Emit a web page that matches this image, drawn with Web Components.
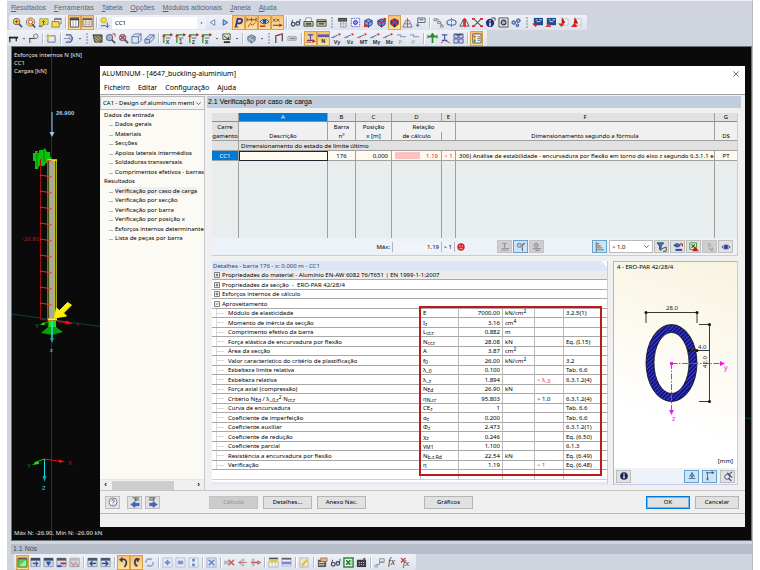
<!DOCTYPE html>
<html lang="pt">
<head>
<meta charset="utf-8">
<title>ALUMINUM</title>
<style>
html,body{margin:0;min-height:100%;background:#fff}
body{font:6px/8px "Noto Sans","Liberation Sans",sans-serif;color:#000}
</style>
</head>
<body>
<app-shell></app-shell>
<script>
const BASE = `*{box-sizing:border-box}
button,select,input{font:inherit;color:inherit;margin:0;padding:0;border-radius:0}
button{cursor:pointer}a{color:inherit;text-decoration:none}`;
function define(name, css, html, setup) {
  customElements.define(name, class extends HTMLElement {
    connectedCallback() {
      if (this.shadowRoot) return;
      const root = this.attachShadow({ mode: 'open' });
      root.innerHTML = `<style>${BASE}${css}</style>${typeof html === 'function' ? html(this) : html}`;
      if (setup) setup(this, root);
    }
  });
}

/* Icon library, drawn on a 12 x 12 grid */
const diag = (t, c = '#333') => `<path d="M1 5L8 2" stroke="#555aa0" stroke-width="1"/><path d="M8 0l3 1-2 2z" fill="#d22"/><path d="M0 5h4" stroke="#7c86c4"/><text x="3" y="11.500" font-size="6" font-family="Liberation Sans" font-weight="700" fill="${c}">${t}</text>`;
const tableIco = (top, mark) => `<path d="M1 1.500h10v9h-10z" fill="#e4e8ef" stroke="#6b7384" stroke-width=".7"/><path d="M1 1h10v3h-10z" fill="${top}"/><path d="M1 6.500h10M1 8.500h10M4.500 4v6M8 4v6" stroke="#aab3c4" stroke-width=".6"/>${mark}`;
const axis = (l) => `<path d="M2 11V2M2 2h9" stroke="#2a9a2a" stroke-width="1.400"/><path d="M0 4l2-3 2 3zM9 0l3 2-3 2z" fill="#c22"/><path d="M4 5.500h5" stroke="#27367c" stroke-width=".8"/><text x="4" y="11.500" font-size="7" font-family="Liberation Sans" font-weight="700" fill="#355">${l}</text>`;
const cube = (c, s = '#1d2a66') => `<path d="M2 4l4-2 4 2v4l-4 3-4-3z" fill="${c}" stroke="${s}" stroke-width=".9"/><path d="M2 4l4 2 4-2M6 6v5" fill="none" stroke="${s}" stroke-width=".8"/>`;
const glass = (c, x) => `<circle cx="5" cy="5" r="3.500" fill="${c}" stroke="#5a5a66" stroke-width="1"/><path d="M7.500 7.500L11 11" stroke="#555" stroke-width="1.800"/>${x}`;
const ICONS = {
  zoomy: glass('#ffe033', '<path d="M3 5h4M5 3v4" stroke="#a33"/>'),
  zoomr: `<circle cx="6" cy="5.500" r="4.500" fill="#ffe14a" stroke="#777"/><circle cx="6" cy="5.500" r="2.200" fill="#fff" stroke="#c33"/><path d="M8 8l3 3.500" stroke="#444" stroke-width="1.600"/>`,
  foldy: `<path d="M2 2h9v6h-5l-4 3z" fill="#f0e050" stroke="#8a8a30" stroke-width=".8"/><path d="M6 9V4M4 6l2-2 2 2" stroke="#553" fill="none"/><path d="M1 10h4" stroke="#555"/>`,
  folder: `<path d="M1 5h8v6H1z" fill="#f6de4c" stroke="#77702a" stroke-width=".8"/><path d="M4 1.500h7v6H9V5H4z" fill="#fff" stroke="#666" stroke-width=".8"/><path d="M4 2.500h7" stroke="#446"/>`,
  grid: `<path d="M1.500 1h9v10h-9z" fill="#fff" stroke="#444"/><path d="M1.500 2.500h9" stroke="#333" stroke-width="2"/><path d="M4.500 3v8M7.500 3v8" stroke="#999"/>`,
  grid2: `<path d="M1 1.500h10v9H1z" fill="#f6ead8" stroke="#666" stroke-width=".9"/><path d="M1 2.500h10" stroke="#556" stroke-width="1.500"/><path d="M1 5.500h10M1 8h10M4 3v7M8 3v7" stroke="#a9a192" stroke-width=".7"/>`,
  bulb: `<circle cx="4" cy="3.500" r="3" fill="#f4e32a" stroke="#998c20" stroke-width=".6"/><path d="M1 9.500h5" stroke="#555"/><path d="M8 6v5M6 9l2 2.500 2-2.500" stroke="#2a5ac0" fill="none"/>`,
  prev: `<path d="M8.500 3v6L3.500 6z" fill="#f2f5fb" stroke="#5b7fc0"/>`,
  next: `<path d="M3.500 3v6L8.500 6z" fill="#a9c2ee" stroke="#2c57a8"/>`,
  P: `<path d="M3 11L5 2h3c3 0 2 5-1 5H5" fill="none" stroke="#27359a" stroke-width="2"/><path d="M1 11h5" stroke="#c33"/>`,
  dims: `<path d="M1 3h10M1 1v4M11 1v4M6 1v4" stroke="#445" stroke-width=".9"/><path d="M2 11l3-4 2 2 3-3" stroke="#a33" fill="none"/>`,
  eye: `<path d="M1 5q5-5 10 0q-5 5-10 0" fill="#fff" stroke="#334"/><circle cx="6" cy="5" r="2.200" fill="#2648a8"/><path d="M1 10l6 0" stroke="#c22" stroke-width="1.500"/>`,
  xx: `<path d="M1 2l3 3M4 2L1 5M5 2l3 3M8 2L5 5" stroke="#445" stroke-width=".9"/><path d="M1 9h8" stroke="#27367c"/><path d="M8 7l4 2-4 2z" fill="#c22"/>`,
  specs: `<circle cx="3.500" cy="8" r="2" fill="none" stroke="#3a4258" stroke-width="1.300"/><circle cx="8.500" cy="7" r="2" fill="#c8d4ee" stroke="#3a4258" stroke-width="1.300"/><path d="M1.500 7.500L3 3M10.500 6.500L11 2" stroke="#3a4258"/>`,
  print: `<path d="M3 1h6v4H3z" fill="#fff" stroke="#666" stroke-width=".7"/><path d="M1 5h10v5H1z" fill="#cfcfb0" stroke="#333" stroke-width=".9"/><path d="M3 7h6M3 8.500h6" stroke="#3a3a3a"/>`,
  print2: `<path d="M1 3h10v7H1z" fill="#d9d9a8" stroke="#333" stroke-width=".9"/><path d="M1 5h10M3 7.500h6" stroke="#333" stroke-width="1.400"/>`,
  movie: `<path d="M1 1h10v4H1z" fill="#444"/><path d="M1 3h10" stroke="#c9b36a" stroke-dasharray="1 1"/><path d="M4 5h6v6H4z" fill="#e8e8f4" stroke="#778" stroke-width=".7"/><path d="M4 7.500h6M7 5v6" stroke="#99a" stroke-width=".6"/>`,
  sel: `<path d="M1.500 1.500h9v9h-9z" fill="#eef" stroke="#5a5ac0" stroke-dasharray="1.500 1"/><circle cx="6" cy="6" r="2.200" fill="#8a94e8" stroke="#3a3aa0"/>`,
  cubeB: cube('#7aa6e8') + '<path d="M1 8h4v3H1z" fill="#c33"/>',
  cubeR: cube('#5f86d8') + '<path d="M8 1h3v3H8z" fill="#c33"/><path d="M4 6h4" stroke="#d33" stroke-width="1.500"/>',
  cubeX: cube('#2f4fb4') + '<path d="M3 3l6 6M9 3L3 9" stroke="#e03030" stroke-width="1.400"/>',
  frame: `<path d="M1 11L4 4h4l3 7zM3 7.500h6M6 1v10" fill="none" stroke="#667" stroke-width=".9"/><path d="M4.500 4L6 1l1.500 3" fill="#d55"/>`,
  flag: `<path d="M3 11V6M3 1h8v5H3z" fill="#dfe5f2" stroke="#4b5570" stroke-width=".9"/><path d="M5 3h4M1 9h4" stroke="#4b5570"/>`,
  chain: `<path d="M2 3l3-1 3 4 2 4" fill="none" stroke="#444" stroke-dasharray="2 1"/><path d="M1 2h3v2H1zM8 9h3v2H8zM5 5h3v2H5z" fill="#fff" stroke="#555" stroke-width=".7"/>`,
  rot: `<ellipse cx="6" cy="6" rx="5" ry="3" fill="none" stroke="#4a6ab8" stroke-width="1.200"/><path d="M6 1v10" stroke="#d33" stroke-dasharray="2 1"/>`,
  mirror: `<path d="M5 2v8H1zM7 2v8h4z" fill="#e6e6ee" stroke="#444" stroke-width=".9"/><path d="M6 1v10" stroke="#d22"/>`,
  xnet: `<path d="M2 2l8 8M10 2l-8 8" stroke="#555" stroke-width="1.200"/><path d="M0 1h3v2H0zM9 1h3v2H9zM0 9h3v2H0zM9 9h3v2H9z" fill="#d22"/>`,
  info: `<circle cx="5.500" cy="6.500" r="4.500" fill="#24307e"/><path d="M5.500 6v4M5.500 3.500v1.500" stroke="#fff" stroke-width="1.500"/><path d="M7 1h4v3" stroke="#444" fill="none"/>`,
  info2: `<circle cx="6" cy="6" r="4.600" fill="#1c2850"/><path d="M6 5.500v3.500M6 3v1.500" stroke="#fff" stroke-width="1.600"/>`,
  gears: `<path d="M1 1h10v10H1z" fill="#e8e4d0" stroke="#444" stroke-width=".9"/><circle cx="6" cy="6" r="2.600" fill="#9db3e2" stroke="#2c3a70" stroke-width="1.200"/>`,
  dots: `<circle cx="3" cy="6" r="2" fill="#8ea4d8" stroke="#3c4f8c"/><circle cx="8" cy="4" r="2" fill="#8ea4d8" stroke="#3c4f8c"/><circle cx="7" cy="9" r="1.500" fill="#8ea4d8" stroke="#3c4f8c"/>`,
  blueA: `<path d="M2 1h10v8H2z" fill="#1f4f8e"/><path d="M4 3h2M8 3h3M5 5h4" stroke="#cfe0f6"/><path d="M0 7l4 4 3-4z" fill="#d82020"/>`,
  blueB: `<path d="M2 1h10v8H2z" fill="#1f4f8e"/><path d="M4 3h2M8 3h3M5 5h4" stroke="#cfe0f6"/><path d="M0 11l4-4 3 4z" fill="#e03a3a"/>`,
  redA: `<path d="M6 2h5v7H6z" fill="#f6f6f6" stroke="#aaa" stroke-width=".7"/><path d="M4 0l4 6-4 2z" fill="#c01818"/><path d="M0 7l4 4 3-4z" fill="#e02222"/>`,
  redB: `<path d="M6 2h5v7H6z" fill="#f6f6f6" stroke="#aaa" stroke-width=".7"/><path d="M4 0l4 7-5 0z" fill="#c01818"/><path d="M0 11l4-5 3 5z" fill="#e02222"/>`,
  beam: `<path d="M1 5h10" stroke="#222" stroke-width="2"/><path d="M2 5v5M9 5v4" stroke="#222" stroke-width="1.300"/>`,
  bulb2: `<path d="M1 6h8" stroke="#554" stroke-width="1.200"/><circle cx="8.500" cy="3.500" r="2.500" fill="#dfe3ec" stroke="#778"/><path d="M2 6v5" stroke="#444"/>`,
  star: `<path d="M2 3h8v7H2z" fill="none" stroke="#667" stroke-width=".9"/><path d="M2 1v6M0 3h6" stroke="#d8c020" stroke-width="1.400"/>`,
  load: `<path d="M2 2h5q4 4 0 8H2" fill="none" stroke="#4a5a94" stroke-width="1.300"/><path d="M0 6h7M5 4l3 2-3 2" stroke="#8a94a8" fill="none"/>`,
  hand: `<path d="M1 2h10v8H3z" fill="#7a6a50" stroke="#333" stroke-width=".8"/><path d="M3 4l5 4M6 3l4 4M3 7l4 3" stroke="#d8c6a0"/>`,
  zoomb: glass('#9db4ea', '<path d="M8 1h3v3" stroke="#c33" fill="none"/>'),
  zoomx: glass('#b9c8ee', '<path d="M2.500 2.500l5 5M7.500 2.500l-5 5" stroke="#d22" stroke-width="1.300"/>'),
  box: `<path d="M1 4h7v7H1zM1 4l3-3h7v7l-3 3M8 4l3-3" fill="#dde4f2" stroke="#4f6496" stroke-width=".9"/>`,
  boxes: `<path d="M1 7h5v4H1zM1 7l5-5h5L6 7M11 2v4l-5 5" fill="#c5d1ea" stroke="#4f6496" stroke-width=".9"/>`,
  ax: axis('x'), ay: axis('1'), az: axis('z'), axx: axis('x'),
  arrowbox: `<path d="M2 1h8v6H2z" fill="#e9e9c0" stroke="#444" stroke-width=".9"/><path d="M3 3l5 4v-3" stroke="#222" fill="none"/><path d="M3 9h7v2H3z" fill="#333"/>`,
  solid: cube('#9aa8bc', '#57687e') + '<path d="M3 5l5 4" stroke="#e8eef8"/>',
  diagR: `<path d="M2 11V3L9 1v8" fill="none" stroke="#445" stroke-width="1.300"/><path d="M2 3L10 1" stroke="#c33"/>`,
  coil: `<path d="M1 4h9v4H1z" fill="#dcdce2" stroke="#999" stroke-width=".9"/><path d="M3 6h6" stroke="#888" stroke-width="1.500"/>`,
  loadI: `<path d="M3 2h6M6 2v5M2 8h8" stroke="#3a4aa0" stroke-width="1.200"/><path d="M8 7l4 2-4 2z" fill="#c22"/><path d="M1 10h6" stroke="#c33"/>`,
  N: `<path d="M0 1.500h12v3H0z" fill="#5660a8"/><text x="3.500" y="11" font-size="6" font-family="Liberation Sans" font-weight="700" fill="#222">N</text>`,
  Vy: diag('Vy'), Vz: diag('Vz'), Mt: diag('MT'), My: diag('My'), Mz: diag('Mz'),
  py: `<path d="M1 2h4v2h6" stroke="#99a0c8" fill="none" stroke-width="1.300"/><text x="3" y="11" font-size="6" font-family="Liberation Sans" fill="#888">p</text>`,
  spr: `<path d="M6 11V3M1 4h10" stroke="#2a8a2a" stroke-width="1.800"/><path d="M6 0l2 3H4zM1 2v4M11 2v4" fill="#2a8a2a" stroke="#2a8a2a"/>`,
  spr2: `<path d="M2 2h6M5 2v6M2 8h6" stroke="#3f58b0" stroke-width="1.300"/><path d="M5 8l6 3M5 8l-4 3" stroke="#c44"/>`,
  win: `<path d="M1 1h4.500v4.500H1zM6.500 1H11v4.500H6.500zM1 6.500h4.500V11H1zM6.500 6.500H11V11H6.500z" fill="#cfd5f2" stroke="#40488c" stroke-width=".9"/><path d="M2 2h8" stroke="#223" />`,
  legend: `<path d="M2 1h9v10H2z" fill="#eee" stroke="#444" stroke-width=".9"/><path d="M3 3h2v2H3z" fill="#d22"/><path d="M3 5h2v2H3z" fill="#dd2"/><path d="M3 7h2v3H3z" fill="#2a2"/><path d="M7 4h3M7 6h3M7 8h3" stroke="#555" stroke-width=".8"/>`,
  tab1: `<path d="M1 2h10v9H1z" fill="#5fc860" stroke="#2c7a3a"/><path d="M2 10l8-7v7z" fill="#a8eaa0"/><path d="M1 1.500h10" stroke="#555" stroke-width="1.500"/>`,
  tab2: tableIco('#3f4a5e', '<path d="M3 7h6M7 5v5" stroke="#2c54b8" stroke-width="1.400"/>'),
  tab3: tableIco('#3f4a5e', '<path d="M3 5h6L6 10z" fill="#2c54b8"/>'),
  tab4: tableIco('#5a5a66', '<path d="M5 6h6v2H5z" fill="#c33"/><path d="M1 9h5v2H1z" fill="#2c54b8"/>'),
  tab5: tableIco('#b9b9c2', '<path d="M2 5l3 5 2-4 3 4" stroke="#dd8a8a" fill="none" stroke-width="1.300"/>'),
  tabL: tableIco('#4a566e', '<path d="M10 7H4M6 4.500L3.500 7 6 9.500" stroke="#2148b8" stroke-width="1.500" fill="none"/>'),
  tabR: tableIco('#4a566e', '<path d="M2 7h6M6 4.500L8.500 7 6 9.500" stroke="#2148b8" stroke-width="1.500" fill="none"/>'),
  undo: `<path d="M3 3c6-2 8 3 4 8" fill="none" stroke="#333a55" stroke-width="1.800"/><path d="M1 3l4-3v6z" fill="#2d3c70"/>`,
  redo: `<path d="M8 2c-5 0-5 5-1 8" fill="none" stroke="#333a55" stroke-width="1.800"/><path d="M5 1l5 1-3 4z" fill="#2d3c70"/><path d="M3 8l3 3" stroke="#a55"/>`,
  sync: `<circle cx="6" cy="6" r="4" fill="none" stroke="#8fa5d2" stroke-width="1.800" stroke-dasharray="9 3"/>`,
  ins1: `<path d="M1 1h10v10H1z" fill="#e8ecf6" stroke="#a8b2c8" stroke-width=".8"/><path d="M3 6h6M6 3v6" stroke="#6f8ad0" stroke-width="2"/>`,
  ins2: `<path d="M1 1h10v10H1z" fill="#e8ecf6" stroke="#a8b2c8" stroke-width=".8"/><path d="M3 4h6v4H3z" fill="#8096d4"/>`,
  ins3: `<path d="M1 1h10v10H1z" fill="#e8ecf6" stroke="#a8b2c8" stroke-width=".8"/><path d="M6 2v3M6 7v3" stroke="#6f8ad0" stroke-width="3"/>`,
  insx: `<path d="M1 1h10v10H1z" fill="#dfe4f0" stroke="#95a0b8" stroke-width=".8"/><path d="M3 3l6 6M9 3L3 9" stroke="#6a84cc" stroke-width="1.800"/>`,
  delx: `<path d="M0 4h6v4H0z" fill="#b8b8c0"/><path d="M5 3l6 6M11 3L5 9" stroke="#c85a5a" stroke-width="1.600"/>`,
  dell: `<path d="M5 2h3v3H5zM5 7h3v3H5z" fill="#b8b8c0"/><path d="M11 6H3M5 4L2 6l3 2" stroke="#c87a7a" fill="none" stroke-width="1.200"/>`,
  delr: `<path d="M2 2h3v3H2zM2 7h3v3H2z" fill="#b8b8c0"/><path d="M1 6h8M8 4l3 2-3 2" stroke="#c85a5a" fill="none" stroke-width="1.400"/>`,
  yel: `<path d="M1 5h10v6H1z" fill="#f4f4f4" stroke="#9aa" stroke-width=".8"/><path d="M1 1h10v5H1z" fill="#e0d43c"/><path d="M1 1.500h10" stroke="#555" stroke-width="1.600"/><path d="M4.500 3v8M8 3v8" stroke="#aab" stroke-width=".7"/>`,
  blu: `<path d="M1 1h10v9H1z" fill="#eef" stroke="#9aa" stroke-width=".8"/><path d="M1 2h10" stroke="#555" stroke-width="1.600"/><path d="M1 5h10v3H1z" fill="#7a86d8"/>`,
  edit: `<path d="M1 1h9v10H1z" fill="#f1e8c4" stroke="#aaa" stroke-width=".8"/><path d="M3 9l6-6" stroke="#e0c020" stroke-width="2"/><path d="M1 11h5V8" fill="#c3cbdc"/>`,
  sheet: `<path d="M1 3h9v8H1z" fill="#5c5c5c"/><path d="M4 1h7v4H4z" fill="#e8b080" stroke="#864" stroke-width=".7"/><path d="M2 6h6M2 8.500h6" stroke="#ddd"/>`,
  xls: `<path d="M1 1h10v10H1z" fill="#eaf6ea" stroke="#2a8a3c" stroke-width="1.600"/><path d="M3.500 3.500l4.500 5M8 3.500l-4.500 5" stroke="#1f7a30" stroke-width="1.800"/><path d="M9 3v6" stroke="#7fc08a"/>`,
  xlsr: `<path d="M1 1h8v8H1z" fill="#dff2df" stroke="#2a8a3c" stroke-width="1"/><path d="M3 3l4 4M7 3L3 7" stroke="#1f7a30" stroke-width="1.300"/><path d="M7 5l5 6H4z" fill="#d01818"/>`,
  calc: `<path d="M1 3h10v8H1z" fill="#3a3a40"/><path d="M3 6h6M3 8.500h6" stroke="#cfcfd6" stroke-dasharray="1.300 1"/><path d="M8 1h2v3H8z" fill="#555"/>`,
  tree: `<path d="M3 11V8h3V2h5v4H6" fill="none" stroke="#7a86a0" stroke-width=".9"/><path d="M6 2h5v3H6zM1 9h3v2H1z" fill="#dfe4ee" stroke="#8a92a4" stroke-width=".7"/>`,
  fx: `<text x="1" y="9" font-size="11" font-style="italic" font-family="Liberation Serif" fill="#444">fx</text>`,
  fxx: `<text x="3" y="10" font-size="10" font-style="italic" font-family="Liberation Serif" fill="#444">fx</text><path d="M1 1l5 5M6 1L1 6" stroke="#d33" stroke-width="1.400"/>`,
  ibeamG: `<path d="M3 2h5M5.500 2v5M2 8h9" stroke="#8d8d8d" stroke-width="1.200"/><path d="M1 10h9" stroke="#9b9b9b"/>`,
  eyef: `<circle cx="4" cy="4" r="2.500" fill="#b9c6d6" stroke="#6a7480"/><path d="M9 1q-3 4-1 10" stroke="#444" fill="none"/><path d="M9 4l2-3" stroke="#c33"/>`,
  ballG: `<circle cx="5" cy="4" r="2.500" fill="#b5b5b5" stroke="#8a8a8a"/><path d="M1 8h10M4 10h5" stroke="#8a8a8a" stroke-width="1.200"/>`,
  bars: `<path d="M1.500 0v12" stroke="#555"/><path d="M2 2h3M2 4.500h5" stroke="#c55" stroke-width="1.500"/><path d="M2 7h7M2 9.500h9" stroke="#5aa08a" stroke-width="1.500"/>`,
  filt: `<path d="M0 1h8L5 5v5L3 9V5z" fill="#3f78c8" stroke="#245"/><path d="M6 8l5-2v5M7 11h4" stroke="#333" fill="none"/>`,
  eyer: `<path d="M1 4q4-4 8 0q-4 4-8 0" fill="#3b64c8" stroke="#223a80"/><path d="M3 9.500h8" stroke="#2b4fb0" stroke-width="2.500"/><path d="M8 1l4 1v4z" fill="#d22"/>`,
  pick: `<path d="M3 1h4v3H3z" fill="#bbb"/><path d="M5 3l5 5-2 0 1 3-1 0-1-3-2 1z" fill="#ddd" stroke="#888" stroke-width=".7"/>`,
  eyeb: `<path d="M1 6q5-5 10 0q-5 5-10 0" fill="#b9c6ea" stroke="#39498c"/><circle cx="6" cy="6" r="2.300" fill="#1f3da0"/>`,
  help: `<circle cx="6" cy="6" r="4.800" fill="#f6f6fa" stroke="#667"/><path d="M4.500 5c0-2.500 3.500-2 3 0-.3 1-1.500 1-1.500 2.200M6 8v1" fill="none" stroke="#334a9a" stroke-width="1.100"/>`,
  back: `<path d="M3 1h8M5 3.500h6M7 1v4" stroke="#444"/><path d="M11 7.500H6V5.500L1 9l5 3.500V10.500h5z" fill="#3568c8" stroke="#1d3c88" stroke-width=".5"/>`,
  fwd: `<path d="M1 1h8M1 3.500h6M7 1v4" stroke="#444"/><path d="M2 7.500h4V5.500L11 9l-5 3.500V10.500H2z" fill="#3568c8" stroke="#1d3c88" stroke-width=".5"/>`,
  stress: `<path d="M6 2v5M4 5l2 3 2-3" stroke="#3e5f86" fill="none" stroke-width="1.200"/><path d="M2 9h8M3 7l3-5 3 5" stroke="#3e5f86" fill="none"/>`,
  dim: `<path d="M2 2h8M3 2v9M2 1v2M10 1v2" stroke="#3e5f86" fill="none"/><path d="M8 0l3 2-3 2zM2 8h2v3H2z" fill="#3e5f86"/>`,
  zfit: `<circle cx="5" cy="7" r="3" fill="#dfe6f4" stroke="#444"/><path d="M7 9l3 3M5 2l6 6M11 1L6 5" stroke="#34509c" stroke-width="1.300"/>`,
  chev: `<path d="M3 4.500l3 3 3-3" fill="none" stroke="#555" stroke-width="1.200"/>`,
  tri: `<path d="M3.500 5h5l-2.500 3z" fill="#555"/>`,
  close: `<path d="M2 2l8 8M10 2l-8 8" stroke="#333"/>`,
  sad: `<circle cx="6" cy="6" r="5.500" fill="#d0202a"/><path d="M3 4.500h2M7 4.500h2" stroke="#fff" stroke-width="1.400"/><path d="M3.500 9q2.500-3 5 0" fill="none" stroke="#fff"/>`
};
define('ui-icon', ':host{display:block;width:12px;height:12px;flex:none}svg{display:block;width:100%;height:100%;overflow:visible}',
  el => `<svg viewBox="0 0 12 12" aria-hidden="true">${ICONS[el.getAttribute('name')] || ''}</svg>`);

/* Items: icon name, "*name" pressed, "|" separator, ":" grip, "v" drop-down arrow, "#" load case box */
define('tool-bar', `
:host{display:flex;align-items:center;height:16px;padding-left:var(--lead,0px);min-width:0;overflow:hidden}
.run{display:flex;align-items:center;background:linear-gradient(#eef1f7,#dde2eb);height:100%;padding-right:4px;margin-left:-2px;padding-left:2px;border-radius:2px}
button{width:13px;height:15px;border:0;background:none;display:grid;place-items:center;flex:none}
ui-icon{width:11px;height:11px}
button.on{background:linear-gradient(#fbbd6a,#fde3a0);box-shadow:inset 0 0 0 1px #d9a14c}
.v{width:7px}.v ui-icon{width:6px}
i{width:5px;height:11px;flex:none;background:linear-gradient(90deg,#0000 2px,#b4bac6 2px,#b4bac6 3px,#fff 3px,#fff 4px,#0000 4px)}
i.g{width:8px;background:radial-gradient(circle at 4px 1px,#b0b7c4 1px,#0000 1px) 0 0/8px 3px}
.cb{width:94px;height:12px;display:grid;flex:none;background:#fff;align-items:center}
.cb>*{grid-area:1/1}.cb ui-icon{justify-self:end;width:9px;background:#eef1f7;height:12px;padding:3px 0}
select{appearance:none;border:0;background:none;width:100%;height:12px;padding-left:3px}`,
  el => '<div class="run">' + el.getAttribute('items').split(' ').map(n => {
    if (n === '|') return '<i></i>';
    if (n === ':') return '<i class="g"></i>';
    if (n === 'v') return '<button class="v" aria-label="Mais"><ui-icon name="tri"></ui-icon></button>';
    if (n === '#') return '<div class="cb"><select aria-label="Caso de carga"><option>CC1</option></select><ui-icon name="tri"></ui-icon></div>';
    const on = n[0] === '*', k = on ? n.slice(1) : n;
    return `<button aria-label="${k}" class="${on ? 'on' : ''}"><ui-icon name="${k}"></ui-icon></button>`;
  }).join('') + '</div>');

define('menu-bar', `:host{display:block}nav{display:flex;gap:var(--menu-gap,8px);padding:0 4px;white-space:nowrap}`,
  el => '<nav>' + el.getAttribute('items').split('|').map(t => `<a href="#">${t.replace(/_(.)/, '<u>$1</u>')}</a>`).join('') + '</nav>');

define('drop-down', `:host{display:grid;align-items:center;background:var(--dd-bg,#fff);border:1px solid #b9b9b9}
select,ui-icon{grid-area:1/1}select{appearance:none;border:0;background:none;width:100%;height:100%;padding:0 10px 0 2px;text-overflow:clip;overflow:hidden}
ui-icon{justify-self:end;width:9px;height:9px;margin-right:1px;pointer-events:none}`,
  el => `<select aria-label="${el.getAttribute('label')}"><option>${el.textContent}</option></select><ui-icon name="chev"></ui-icon>`);

define('icon-button', `:host{display:block;flex:none}
button{width:15px;height:13px;display:grid;place-items:center;background:#e1e1e1;border:1px solid #bdbdbd}
:host([on]) button{background:#cce4f7;border-color:#6aa0cc}:host([off]) button{background:#cfcfcf;border-color:#c4c4c4}
ui-icon{width:10px;height:10px}`,
  el => `<button aria-label="${el.getAttribute('name')}"><ui-icon name="${el.getAttribute('name')}"></ui-icon></button>`);

define('push-button', `:host{display:block;flex:none;width:var(--w,49px)}
button{width:100%;height:13px;background:#e1e1e1;border:1px solid #b5b5b5;text-align:center;line-height:10px}
:host([primary]) button{border:1px solid #0078d7;outline:1px solid #7ab6e6;outline-offset:-2px}
:host([off]) button{background:#ccc;border-color:#c2c2c2;color:#8b8b8b}`, '<button><slot></slot></button>');

/* 3D model behind the dialog, in window coordinates */
const ticks = [158, 174, 190, 206, 222, 238, 254, 270, 286, 302].map(y => `M40 ${y}l12 2`).join('');
define('model-view', `:host{display:block;position:absolute;inset:0;overflow:hidden;color:#e6e6e6}
svg{position:absolute;width:100%;height:100%}text{font:6px "Liberation Sans",sans-serif}
.top{position:relative;padding:4px 2px;line-height:8px}.bot{position:absolute;left:2px;bottom:3px}`, `
<svg aria-hidden="true"><g transform="translate(-12 -46)">
<path d="M51.500 46V540M12 313L760 419" stroke="#0d4345" fill="none"/>
<path d="M52 111v20" stroke="#86aadc" stroke-width="1.200"/><path d="M49.500 131l2.500 5 2.500-5z" fill="#a5c6f0"/><text x="56" y="114" fill="#a5c6f0" style="font-weight:700">26.900</text>
<path d="M33 152h2v-2h3v2h1v-3h4l2-2 2 4h3v4l3 5-7 2-2 3-5 0-1 3h-3v-8h-2z" fill="#08c408"/><path d="M37 151v14M44 149v12" stroke="#0a7a0a"/>
<path d="M47 159h10v160H47z" fill="#4d4b12"/><path d="M50 159h5v160h-5z" fill="#a5a89c"/><path d="M49.500 159v160M54.500 159v160M56.500 159v160" stroke="#c8bf2a" stroke-width=".8"/><path d="M47.500 159v160" stroke="#77701a"/><path d="M47 159h10" stroke="#ffee20" stroke-width="1.500"/>
<path d="M40.500 158V318M40 318l12 2" stroke="#a80c0c" fill="none"/><path d="${ticks}" stroke="#e04020" stroke-width=".9"/>
<text x="22" y="240" fill="#b01818">-26.80</text>
<path d="M48 320h8v6l7 5-11 3-11-2 7-6z" fill="#0aa00a"/><path d="M49 320h7v6h-7z" fill="#12e212"/>
<path d="M48 318.500h9" stroke="#ffee20" stroke-width="2"/>
<path d="M52 320v18" stroke="#20e0e0" stroke-width="1.500"/><path d="M50 337h4l-2 5z" fill="#18a8b0"/><text x="50" y="351" fill="#18c8c8" style="font-weight:700">z</text>
<path d="M57 320l12 2" stroke="#d01010" stroke-width="1.300"/><path d="M66 319.500l7 3-7 1z" fill="#e01010"/><text x="76" y="325" fill="#c01010">x</text>
<path d="M48 321l-6 2" stroke="#10c010"/><path d="M40 324l4-3 1 3z" fill="#10e010"/><text x="35" y="327" fill="#10a010">Y</text>
<path d="M71.500 304l-8 8 3 3-12 2 2-10 3 2.500 8-8z" fill="#fff200" stroke="#fff200"/>
<path d="M44 458l18 2.500" stroke="#e01010"/><path d="M59 458.500l6 2-6 1.500z" fill="#f01010"/><text x="68" y="464" fill="#c01010">X</text>
<path d="M44 458l-10 4" stroke="#10d010"/><path d="M32 464l6-4 1 3z" fill="#10f010"/><text x="27" y="467" fill="#10a010">Y</text>
<path d="M44.500 458v18" stroke="#10e8e8"/><path d="M42.500 475h4l-2 6z" fill="#10a8b0"/><text x="42" y="489" fill="#18b8b8" style="font-weight:700">Z</text>
</g></svg>
<div class="top">Esforços internos N [kN]<br>CC1<br>Cargas [kN]</div>
<div class="bot">Máx N: -26.90, Mín N: -26.90 kN</div>`);

define('nav-tree', `
:host{display:flex;flex-direction:column;background:#fbfaf4;border-right:1px solid #c8c8c8;min-width:0}
ul{list-style:none;margin:0;padding:1px 0 0 4px;flex:1;display:grid;grid-auto-rows:9px 10px;align-content:start;white-space:nowrap;line-height:9px}
li.c{padding-left:11px;background:linear-gradient(#b5b5b5,#b5b5b5) 5px 5px/4px 1px no-repeat}
.sel a{background:#efeff1}
.sb{height:11px;background:#f0f0f0;display:flex;align-items:center;justify-content:space-between;padding:0 3px;border-top:1px solid #e6e6e6}
.sb b{flex:1;margin:0 22px 0 4px;height:9px;background:#cdcdcd}
.sb button{border:0;background:none;height:9px;width:5px;font:700 8px/8px "Liberation Sans",sans-serif}`,
  () => {
    const g = { 'Dados de entrada': ['Dados gerais', 'Materiais', 'Secções', 'Apoios laterais intermédios', 'Soldaduras transversais', 'Comprimentos efetivos - barras'], 'Resultados': ['Verificação por caso de carga', 'Verificação por secção', 'Verificação por barra', 'Verificação por posição x', 'Esforços internos determinante', 'Lista de peças por barra'] };
    let h = '<ul>';
    for (const k in g) h += `<li>${k}</li>` + g[k].map(t => `<li class="c${t.includes('caso') ? ' sel' : ''}"><a href="#">${t}</a></li>`).join('');
    return h + '</ul><div class="sb"><button aria-label="Esquerda">‹</button><b></b><button aria-label="Direita">›</button></div>';
  });

define('result-table', `
:host{display:block;border-right:1px solid #c9c9ee;border-bottom:1px solid #c9c9ee}
table{width:100%;table-layout:fixed;border-collapse:separate;border-spacing:0;text-align:center;white-space:nowrap}
th,td{padding:0;border-right:1px solid #a0a0a0;font-weight:400;line-height:8px}
tr>:last-child{border-right:0}tr>:first-child{background:#e1e1e1}
.l th{background:#e1e1e1;border-bottom:1px solid #8d8d8d;height:9px}.l .on,.d .on{background:#0078d7;color:#fff}
.h th{background:#f0f0f0;height:10px}.h2 th{height:9px;border-bottom:1px solid #a0a0a0}
.h th:first-child{background:#e1e1e1}
.s td{background:#e1e1e1;text-align:left;height:10px;border-bottom:1px solid #a0a0a0;padding-left:2px}
.d td{background:#fffaf0;height:10px;border-bottom:1px solid #a0a0a0}.d .r{text-align:right;padding-right:3px}.d .red{color:#f0142c}
.d .bar{background:linear-gradient(#ffc0c0,#ffc0c0) 3px 1px/25px 7px no-repeat #fffaf0}
.d .f{text-align:left;padding-left:3px}.d .cell{border:1px solid #223}
.e td{background:#e8eeee;height:77px}
footer{display:flex;align-items:center;height:17px;background:#edf1f8;padding-right:4px;gap:2px}
footer .m{width:178px;text-align:right}
footer output{border:1px solid #b0b4bc;border-width:0 1px 0 1px;background:#f0f3f8;height:10px;line-height:10px;text-align:right;padding-right:2px;width:50px}
footer .c{width:14px;margin-left:-3px}footer ui-icon{width:8px;height:8px}
.mid{display:flex;gap:1px;margin-left:30px}.sp{flex:1}drop-down{width:44px;height:13px}footer icon-button{margin-left:-1px}.mid icon-button{margin:0}`, `
<table><colgroup><col style="width:27px"><col style="width:89px"><col style="width:28px"><col style="width:36px"><col style="width:50px"><col style="width:14px"><col><col style="width:22px"></colgroup>
<thead><tr class="l"><th></th><th class="on">A</th><th>B</th><th>C</th><th>D</th><th>E</th><th>F</th><th>G</th></tr>
<tr class="h"><th>Carre</th><th></th><th>Barra</th><th>Posição</th><th colspan="2">Relação</th><th></th><th></th></tr>
<tr class="h h2"><th>gamento</th><th>Descrição</th><th>nº</th><th>x [m]</th><th>de cálculo</th><th></th><th>Dimensionamento segundo a fórmula</th><th>DS</th></tr></thead>
<tbody><tr class="s"><td></td><td colspan="7">Dimensionamento do estado de limite último</td></tr>
<tr class="d"><td class="on">CC1</td><td class="cell"></td><td>176</td><td class="r">0.000</td><td class="r red bar">1.19</td><td class="red">&gt; 1</td><td class="f">306) Análise de estabilidade - encurvadura por flexão em torno do eixo z segundo 6.3.1.1 e</td><td>PT</td></tr>
<tr class="e"><td></td><td></td><td></td><td></td><td></td><td></td><td></td><td></td></tr></tbody></table>
<footer><span class="m">Máx:</span><output>1.19</output><output class="c">&gt; 1</output><ui-icon name="sad"></ui-icon>
<div class="mid"><icon-button off name="ibeamG"></icon-button><icon-button on name="eyef"></icon-button><icon-button off name="ballG"></icon-button></div><span class="sp"></span>
<icon-button on name="bars"></icon-button><drop-down label="Filtro">&gt; 1,0</drop-down><icon-button name="filt"></icon-button><icon-button name="eyer"></icon-button><icon-button name="xlsr"></icon-button><icon-button off name="pick"></icon-button><icon-button name="eyeb"></icon-button></footer>`);

const ROWS = [
  ['Módulo de elasticidade', 'E', '7000.00', 'kN/cm<sup>2</sup>', '', '3.2.5(1)'],
  ['Momento de inércia da secção', 'I<sub>z</sub>', '3.16', 'cm<sup>4</sup>', '', ''],
  ['Comprimento efetivo da barra', 'L<sub>cr,z</sub>', '0.882', 'm', '', ''],
  ['Força elástica de encurvadura por flexão', 'N<sub>cr,z</sub>', '28.08', 'kN', '', 'Eq. (I.15)'],
  ['Área da secção', 'A', '3.87', 'cm<sup>2</sup>', '', ''],
  ['Valor característico do critério de plastificação', 'f<sub>0</sub>', '26.00', 'kN/cm<sup>2</sup>', '', '3.2'],
  ['Esbelteza limite relativa', 'λ_<sub>0</sub>', '0.100', '', '', 'Tab. 6.6'],
  ['Esbelteza relativa', 'λ_<sub>z</sub>', '1.894', '', '<b>&gt; λ_<sub>0</sub></b>', '6.3.1.2(4)'],
  ['Força axial (compressão)', 'N<sub>Ed</sub>', '26.90', 'kN', '', ''],
  ['Critério N<sub>Ed</sub> / λ_<sub>0,z</sub><sup>2</sup> N<sub>cr,z</sub>', 'η<sub>N,cr</sub>', '95.803', '', '&gt; 1.0', '6.3.1.2(4)'],
  ['Curva de encurvadura', 'CE<sub>z</sub>', '1', '', '', 'Tab. 6.6'],
  ['Coeficiente de imperfeição', 'α<sub>z</sub>', '0.200', '', '', 'Tab. 6.6'],
  ['Coeficiente auxiliar', 'Φ<sub>z</sub>', '2.473', '', '', '6.3.1.2(1)'],
  ['Coeficiente de redução', 'χ<sub>z</sub>', '0.246', '', '', 'Eq. (6.50)'],
  ['Coeficiente parcial', 'γ<sub>M1</sub>', '1.100', '', '', '6.1.3'],
  ['Resistência a encurvadura por flexão', 'N<sub>b,z,Rd</sub>', '22.54', 'kN', '', 'Eq. (6.49)'],
  ['Verificação', 'η', '1.19', '', '<b>&gt; 1</b>', 'Eq. (6.48)']];
define('detail-table', `
:host{display:block;position:relative;background:#fff;border-right:1px solid #c9c9ee;border-bottom:3px solid #e6e8f2;min-width:0}
h3{margin:0;font:inherit;height:10px;line-height:10px;padding-left:1px;background:#dce6f4;color:#2f4468;clip-path:polygon(0 0,calc(100% - 6px) 0,100% 6px,100% 100%,0 100%)}
table{width:100%;table-layout:fixed;border-collapse:separate;border-spacing:0;white-space:nowrap}
td{padding:0 0 0 2px;border-bottom:1px solid #a8a8a8;border-right:1px solid #bcbcbc;height:9px;line-height:8px}
tr:nth-child(even) td{height:10px}
tr>:last-child{border-right:0}.n{text-align:right;padding-right:2px}
.lab{padding-left:16px;background:linear-gradient(#d8d8d8,#d8d8d8) 4px 4px/8px 1px no-repeat,linear-gradient(#d8d8d8,#d8d8d8) 4px 0/1px 100% no-repeat}
tr.g1 td{background:#ececec}tr.g td{padding-left:1px}tr:last-child td{height:10px;border-bottom:1px solid #d0d0d0}
sub,sup{font-size:5px;line-height:0}sub{vertical-align:-1px}sup{vertical-align:2px}b{font-weight:400;color:#f0142c}
.pm{display:inline-block;width:6px;height:6px;margin:0 2px 0 1px;vertical-align:-1px}.pm svg{display:block}
.mark{position:absolute;left:207px;right:5px;top:45px;bottom:6px;border:2px solid #bf1a1a;pointer-events:none}`,
  () => `<h3>Detalhes - barra 176 - x: 0.000 m - CC1</h3><table><colgroup><col><col style="width:38px"><col style="width:44px"><col style="width:32px"><col style="width:29px"><col style="width:43px"></colgroup><tbody>`
    + ['Propriedades do material - Alumínio EN-AW 6082 T6/T651 | EN 1999-1-1:2007', 'Propriedades da secção &nbsp;- &nbsp;ERO-PAR 42/28/4', 'Esforços internos de cálculo', 'Aproveitamento'].map((t, i) => `<tr class="g g${i + 1}"><td colspan="6"><span class="pm"><svg width="6" height="6" viewBox="0 0 12 12"><path d="M1 1h10v10H1z" fill="#fff" stroke="#555" stroke-width="1.500"/><path d="M3 6h6${i < 3 ? 'M6 3v6' : ''}" stroke="#333" stroke-width="1.500"/></svg></span>${t}</td></tr>`).join('')
    + ROWS.map(r => '<tr>' + r.map((c, i) => `<td class="${['lab', '', 'n'][i] || ''}">${c}</td>`).join('') + '</tr>').join('')
    + '<tr><td></td><td></td><td></td><td></td><td></td><td></td></tr></tbody></table><div class="mark"></div>');

define('section-preview', `
:host{display:flex;flex-direction:column;border:1px solid #b5b5bd;border-right-color:#c9c9ee;border-bottom-color:#c9c9ee;background:linear-gradient(200deg,#f9f3df,#fff 70%);min-width:0}
p{margin:0;padding:1px 3px 0;line-height:9px}.u{text-align:right;padding:0 4px 2px}
svg{flex:1;width:100%;min-height:0}footer{display:flex;gap:3px;align-items:center;height:16px;padding:0 2px;background:#edf1f8}.sp{flex:1}
text{font:6px "Noto Sans",sans-serif;fill:#222}`, `
<p>4 - ERO-PAR 42/28/4</p>
<svg viewBox="614 273 123 183" role="img" aria-label="Secção ERO-PAR 42/28/4">
<defs><pattern id="h" width="3" height="3" patternUnits="userSpaceOnUse" patternTransform="rotate(-45)"><path d="M0 0h3v3H0z" fill="#10108c"/><path d="M0 1.500h3" stroke="#5b5bc8" stroke-width=".7"/></pattern></defs>
<ellipse cx="671.500" cy="363" rx="21.500" ry="34.500" fill="none" stroke="url(#h)" stroke-width="8"/>
<ellipse cx="671.500" cy="363" rx="25.500" ry="38.500" fill="none" stroke="#111" stroke-width=".8"/><ellipse cx="671.500" cy="363" rx="17.500" ry="30.500" fill="none" stroke="#111" stroke-width=".8"/>
<path d="M646 323v-11M697 323v-11M646 312.500h51M699 324.500h12M699 401.500h12M709.500 324v78M688 350.500h21" stroke="#222" fill="none" stroke-width=".9"/>
<g fill="#111"><circle cx="646" cy="312.500" r="1.500"/><circle cx="697" cy="312.500" r="1.500"/><circle cx="709.500" cy="324.500" r="1.500"/><circle cx="709.500" cy="401.500" r="1.500"/><circle cx="689" cy="350.500" r="1.500"/><circle cx="697" cy="350.500" r="1.500"/></g>
<path d="M671.500 363.500h50M671.500 363v47" stroke="#f018f0" stroke-dasharray="6 1.500 1.500 1.500"/><path d="M720 361l5 2.500-5 2.500zM669 410h5l-2.500 5zM670 362h3v3h-3z" fill="#f018f0"/>
<text x="666" y="310">28.0</text><text x="698" y="349">4.0</text><text transform="translate(707 368) rotate(-90)">42.0</text>
<text x="724" y="370" style="fill:#f018f0;font-size:7px">y</text><text x="672" y="421" style="fill:#f018f0;font-size:7px">z</text>
</svg>
<p class="u">[mm]</p>
<footer><icon-button name="info2"></icon-button><span class="sp"></span><icon-button on name="stress"></icon-button><icon-button on name="dim"></icon-button><icon-button name="zfit"></icon-button></footer>`);

define('module-dialog', `
:host{display:flex;flex-direction:column;position:relative;background:#f0f0f0;min-width:0;color:#000}
header{background:#fff;font-size:7px;line-height:15px;display:flex;justify-content:space-between;padding:0 5px 0 2px}
header button{border:0;background:none;width:8px;height:15px;display:grid;place-items:center}header ui-icon{width:8px;height:8px}
menu-bar{background:#fff;font-size:7px;line-height:13px;border-bottom:1px solid #a0a0a0;--menu-gap:8px}
.body{flex:1;display:grid;grid-template-columns:105px minmax(0,1fr);gap:2px;padding:1px 4px 0 0;min-height:0}
.side{display:flex;flex-direction:column;min-width:0}.side drop-down{height:14px;--dd-bg:#f3f3f3}nav-tree{flex:1}
.main{display:flex;flex-direction:column;min-width:0}
h2{margin:0 0 5px;background:#c0cddb;font:7px/12px "Liberation Sans",sans-serif;padding-left:1px}
result-table{margin:0 3px 5px 5px}
.det{flex:1;display:grid;grid-template-columns:minmax(0,1fr) 125px;gap:5px;margin:0 3px 5px 5px;min-height:0}
.foot{display:flex;align-items:center;gap:5px;padding:0 6px 0 5px;height:24px;border-top:1px solid #c6c6c6;border-bottom:1px solid #b9b9b9}
.foot icon-button{margin-right:-2px}.foot icon-button:first-child{margin-right:2px}.g1{margin-left:46px}.g2{margin-left:53px}.sp{flex:1}
.status{height:13px}.foot .s{--w:44px}`, `
<header><span>ALUMINUM - [4647_buckling-aluminium]</span><button aria-label="Fechar"><ui-icon name="close"></ui-icon></button></header>
<menu-bar items="Ficheiro|Editar|Configuração|Ajuda"></menu-bar>
<div class="body"><div class="side"><drop-down label="Caso">CA1 - Design of aluminum memb</drop-down><nav-tree></nav-tree></div>
<div class="main"><h2>2.1 Verificação por caso de carga</h2><result-table></result-table>
<div class="det"><detail-table></detail-table><section-preview></section-preview></div></div></div>
<div class="foot"><icon-button name="help"></icon-button><icon-button name="back"></icon-button><icon-button name="fwd"></icon-button>
<push-button class="g1" off>Cálculo</push-button><push-button>Detalhes...</push-button><push-button>Anexo Nac.</push-button><push-button class="g2">Gráficos</push-button><span class="sp"></span><push-button class="s" primary>OK</push-button><push-button class="s">Cancelar</push-button></div>
<div class="status"></div>`);

define('app-shell', `
:host{display:flex;flex-direction:column;min-height:100vh;margin:0 7px;background:#cfd4de;border-top:1px solid #eceef2;border-right:1px solid #b4b8c0;box-sizing:border-box}
.mm{font:7px/14px "Liberation Sans",sans-serif;color:#5a6474;--menu-gap:8px}
.view{flex:1;margin:0 0 0 4px;border:1px solid #6c7078;background:#0a0a0a;position:relative;display:grid;padding:19px 6px 13px 88px}
h1{margin:3px 0 0 4px;font:7px/10px "Liberation Sans",sans-serif;background:#b7bec9;color:#454d5a;padding-left:2px}
.a{height:15px;--lead:4px}.c{--lead:9px;background:#cfd4de}`, `
<menu-bar class="mm" items="_Resultados|_Ferramentas|_Tabela|_Opções|_Módulos adicionais|_Janela|_Ajuda"></menu-bar>
<tool-bar class="a" items="zoomy zoomr foldy folder | *grid *grid2 | bulb # prev next *P *dims *eye *xx | specs print print2 : movie sel cubeB cubeR *cubeX frame flag | chain rot mirror xnet info gears dots : blueA blueB redA redB"></tool-bar>
<tool-bar items="beam v bulb2 | star | load v : hand zoomb zoomx box boxes | ax ay az axx v arrowbox v | solid v : diagR coil | *loadI *N Vy Vz Mt My Mz py py | spr spr2 win | *legend"></tool-bar>
<div class="view"><model-view></model-view><module-dialog></module-dialog></div>
<h1>1.1 Nós</h1>
<tool-bar class="c" items="*tab1 tab2 tab3 tab4 tab5 | tabL tabR | *undo *redo sync | ins1 ins2 ins3 | insx | delx dell delr | yel blu | edit | sheet specs xls calc | tree fx fxx"></tool-bar>`);
</script>
</body>
</html>
